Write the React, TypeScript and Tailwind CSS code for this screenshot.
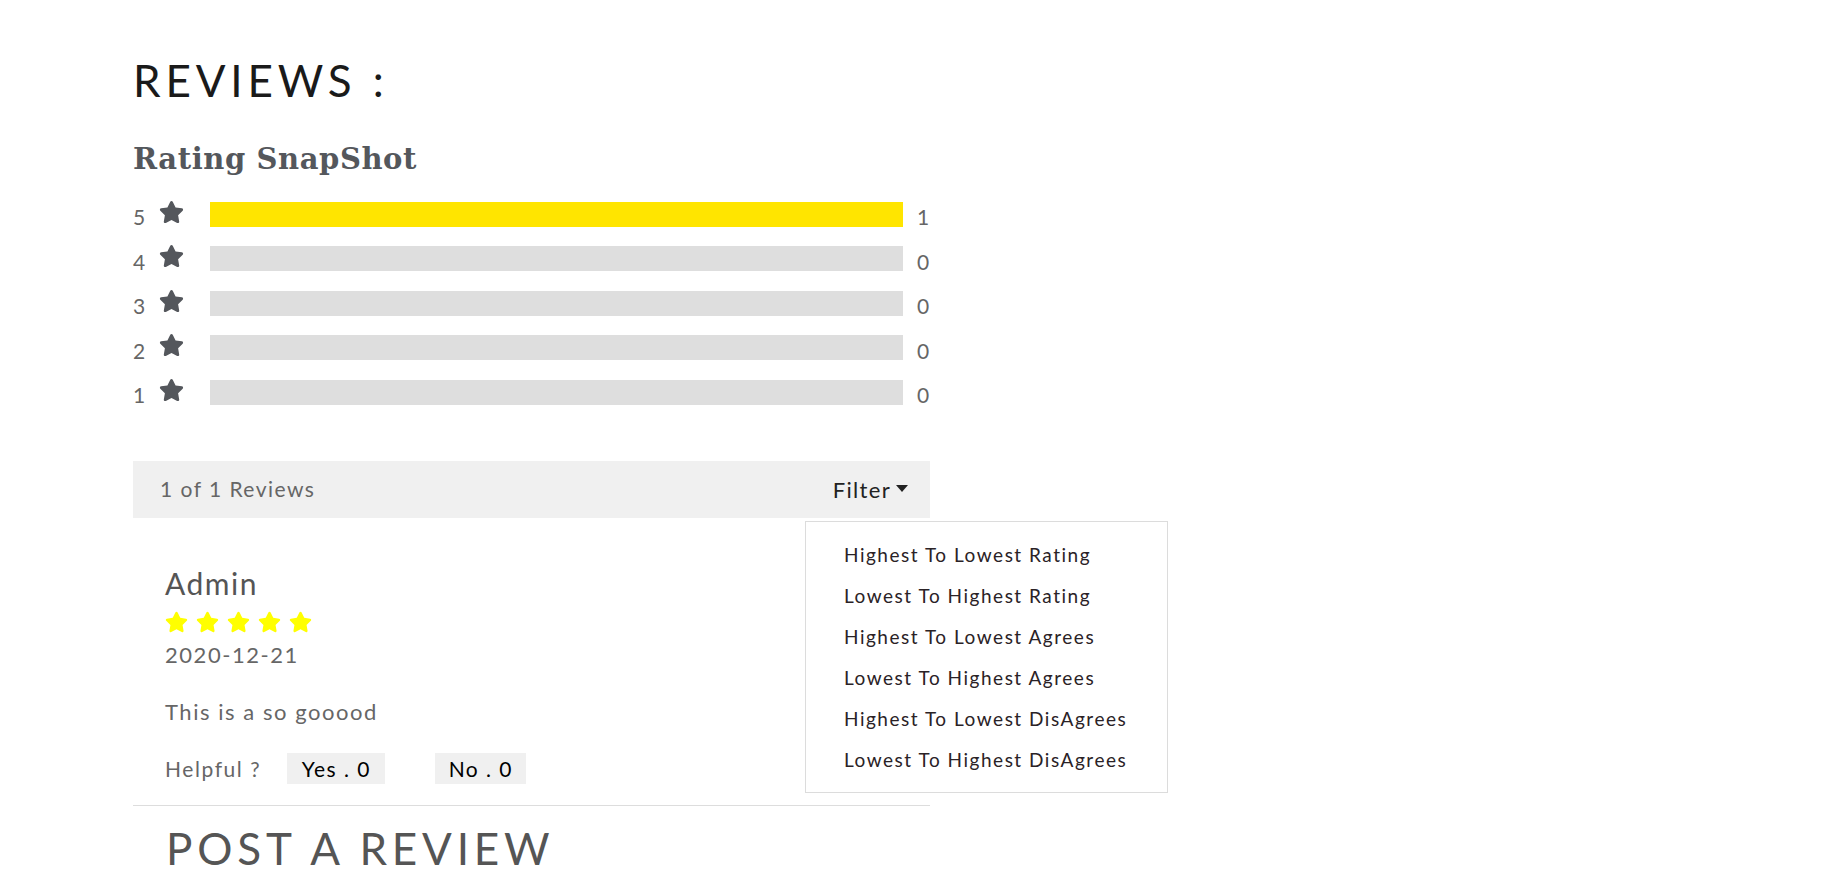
import { FaStar } from 'react-icons/fa'

const ratingRows = [
  { star: 5, count: 1, pct: 100 },
  { star: 4, count: 0, pct: 0 },
  { star: 3, count: 0, pct: 0 },
  { star: 2, count: 0, pct: 0 },
  { star: 1, count: 0, pct: 0 },
]

const filterOptions = [
  'Highest To Lowest Rating',
  'Lowest To Highest Rating',
  'Highest To Lowest Agrees',
  'Lowest To Highest Agrees',
  'Highest To Lowest DisAgrees',
  'Lowest To Highest DisAgrees',
]

export default function App() {
  return (
    <div className="min-h-[877px] bg-white font-['Lato',sans-serif] text-[#555]">
      <div className="w-[797px] ml-[133px] pt-[58px]">
        {/* header */}
        <h1 className="text-[44px] leading-none tracking-[0.11em] text-[#1a1a1a] font-normal">REVIEWS :</h1>
        <h2 className="mt-[43px] font-['DejaVu_Serif',serif] font-bold text-[29px] leading-none text-[#54575c] tracking-[0.02em]">
          Rating SnapShot
        </h2>

        {/* snapshot bars */}
        <div className="mt-[27.5px] flex flex-col gap-[19.5px]">
          {ratingRows.map((r) => (
            <div key={r.star} className="flex items-center h-[25px]">
              <span className="w-[26px] text-[21px] leading-none text-[#666] pt-[5px]">{r.star}</span>
              <FaStar className="w-[25px] h-[24px] text-[#54575c] -mt-[5px]" />
              <div className="ml-[26px] w-[693px] h-[25px] bg-[#dedede]">
                <div className="h-full bg-[#ffe500]" style={{ width: `${r.pct}%` }} />
              </div>
              <span className="ml-[14px] text-[21px] leading-none text-[#666] pt-[5px]">{r.count}</span>
            </div>
          ))}
        </div>

        {/* filter bar */}
        <div className="relative mt-[56px] h-[57px] bg-[#f0f0f0] flex items-center justify-between pl-[27px] pr-[22px]">
          <span className="text-[21px] tracking-[0.07em] text-[#666]">1 of 1 Reviews</span>
          <button type="button" className="flex items-center gap-[5px] text-[22px] tracking-[0.06em] text-[#222]">
            <span>Filter</span>
            <span className="w-0 h-0 border-l-[6px] border-r-[6px] border-t-[7px] border-l-transparent border-r-transparent border-t-[#222] mb-[2px]" />
          </button>

          <div className="absolute right-[-238px] top-[calc(100%+3px)] w-[363px] h-[272px] bg-white border border-[#dcdcdc] pt-[13px] pl-[38px] z-10">
            {filterOptions.map((o) => (
              <div key={o} className="h-[41px] flex items-center text-[19px] tracking-[0.08em] text-[#2a2226]">
                {o}
              </div>
            ))}
          </div>
        </div>

        {/* single review */}
        <div className="pl-[32px] pt-[50px] pb-[21px]">
          <div className="text-[30px] leading-none tracking-[0.05em] text-[#555]">Admin</div>
          <div className="mt-[13px] flex gap-[8px]">
            {[0, 1, 2, 3, 4].map((i) => (
              <FaStar key={i} className="w-[23px] h-[22px] text-[#ffff00]" />
            ))}
          </div>
          <div className="mt-[11px] text-[22px] leading-none tracking-[0.07em] text-[#666]">2020-12-21</div>
          <p className="mt-[35px] text-[22px] leading-none tracking-[0.07em] text-[#666]">This is a so gooood</p>
          <div className="mt-[30px] flex items-center">
            <span className="text-[21px] tracking-[0.075em] text-[#666]">Helpful ?</span>
            <button type="button" className="ml-[26px] h-[31px] w-[98px] bg-[#f0f0f0] text-[21px] text-black tracking-[0.07em]">
              Yes . 0
            </button>
            <button type="button" className="ml-[50px] h-[31px] w-[91px] bg-[#f0f0f0] text-[21px] text-black tracking-[0.07em]">
              No . 0
            </button>
          </div>
        </div>
        <div className="h-px bg-[#dddddd]" />

        <h2 className="pl-[33px] mt-[20px] text-[44px] leading-none tracking-[0.11em] text-[#555] font-normal">POST A REVIEW</h2>
      </div>
    </div>
  )
}
